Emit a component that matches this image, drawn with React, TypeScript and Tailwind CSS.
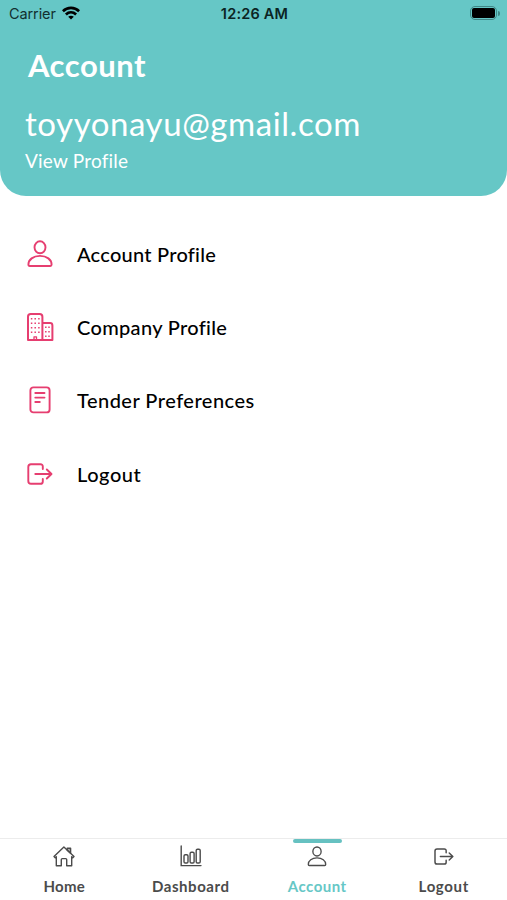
import React from 'react';

type IconProps = { className?: string; strokeWidth?: number };

const UserIcon = ({ className, strokeWidth = 2 }: IconProps) => (
  <svg viewBox="0 0 26 28" className={className} fill="none" stroke="currentColor" strokeWidth={strokeWidth} strokeLinejoin="round">
    <ellipse cx="13" cy="7.3" rx="5.5" ry="6" />
    <path d="M1.4 24.6c0-5 4.8-8.7 11.6-8.7s11.6 3.7 11.6 8.700c0 1-.4 1.400-1.300 1.400H2.700c-.9 0-1.300-.4-1.300-1.400z" />
  </svg>
);

const BuildingIcon = ({ className }: IconProps) => (
  <svg viewBox="0 0 28 30" className={className} fill="none" stroke="currentColor" strokeWidth="2" strokeLinejoin="round" strokeLinecap="round">
    <path d="M2 28V4.700Q2 2 4.700 2h9q2.700 0 2.700 2.700V28M16.400 11h7.600q2.400 0 2.400 2.400V28M2 28h24.400" />
    <path d="M8 28v-3.200h2.500V28" strokeWidth="1.300" />
    <path d="M5.600 6v18M9.200 6v16M12.900 6v18M19.800 14.500v11M23 14.500v11" strokeWidth="1.500" strokeDasharray="1.500 3" strokeLinecap="butt" />
  </svg>
);

const DocumentIcon = ({ className }: IconProps) => (
  <svg viewBox="0 0 22 28" className={className} fill="none" stroke="currentColor" strokeWidth="1.900" strokeLinecap="round">
    <rect x="1.400" y="1.400" width="19.200" height="25" rx="3" />
    <path d="M6.300 7h9.200M6.300 11.600h9.200M6.300 16h4.500" />
  </svg>
);

const LogoutIcon = ({ className, strokeWidth = 2 }: IconProps) => (
  <svg viewBox="0 0 26 22" className={className} fill="none" stroke="currentColor" strokeWidth={strokeWidth} strokeLinecap="round" strokeLinejoin="round">
    <path d="M15.800 6V3.600q0-2.400-2.400-2.400H4Q1.300 1.200 1.300 4v14q0 2.800 2.700 2.800h9.400q2.400 0 2.400-2.400V16M8.300 11h16M19.800 6.500l4.700 4.500-4.700 4.500" />
  </svg>
);

const HomeIcon = ({ className }: IconProps) => (
  <svg viewBox="0 0 22 21" className={className} fill="none" stroke="currentColor" strokeWidth="1.400" strokeLinejoin="round">
    <path d="M1 10.500 10.900 1 21 10.500l-1.200 1.200-1.100-1V19.800h-5v-6.200q0-1-1-1H9.300q-1 0-1 1v6.200h-5v-9.100l-1.100 1z" />
    <path d="M14.200 4.200V2.300h3.400V7.200z" fill="currentColor" fillOpacity=".45" />
  </svg>
);

const ChartIcon = ({ className }: IconProps) => (
  <svg viewBox="0 0 22 22" className={className} fill="none" stroke="currentColor" strokeWidth="1.400" strokeLinecap="round">
    <path d="M1.200 1v19.600h19.800" />
    <rect x="4" y="9.700" width="4" height="8.300" rx="1.300" />
    <rect x="10.100" y="7.300" width="4" height="10.700" rx="1.300" />
    <rect x="16.200" y="4.200" width="4" height="13.800" rx="1.300" />
  </svg>
);

const WifiIcon = () => (
  <svg viewBox="0 0 18 14" className="h-[14px] w-[18px]" fill="none" stroke="currentColor" strokeWidth="2.700">
    <path d="M.9 5.200C5.500.8 12.500.8 17.100 5.200M3.900 8.500c3-2.800 7.200-2.800 10.200 0" />
    <path d="M6.200 10.800c1.600-1.500 4-1.500 5.600 0L9 13.600z" fill="currentColor" stroke="none" />
  </svg>
);

const menu = [
  { label: 'Account Profile', icon: <UserIcon className="h-7 w-[26px]" strokeWidth={1.9} />, text: 'tracking-[0.250px]' },
  { label: 'Company Profile', icon: <BuildingIcon className="h-[30px] w-7" />, text: 'tracking-[0.320px]' },
  { label: 'Tender Preferences', icon: <DocumentIcon className="h-7 w-[22px]" />, text: 'tracking-[0.480px]' },
  { label: 'Logout', icon: <LogoutIcon className="h-[22px] w-[26px]" strokeWidth={1.900} />, text: 'tracking-[0.550px]' },
];

const tabs = [
  { label: 'Home', icon: <HomeIcon className="h-[21px] w-[22px]" />, text: 'tracking-[0.300px]' },
  { label: 'Dashboard', icon: <ChartIcon className="h-[22px] w-[22px]" />, text: 'tracking-[0.560px]' },
  { label: 'Account', icon: <UserIcon className="h-[21px] w-[20px]" strokeWidth={1.8} />, text: 'tracking-[0.500px] text-[#66c7c6]', active: true },
  { label: 'Logout', icon: <LogoutIcon className="h-[17px] w-[20px]" strokeWidth={1.900} />, text: 'tracking-[0.650px]' },
];

export default function App() {
  return (
    <div className="flex h-[900px] w-[507px] flex-col overflow-hidden bg-white font-[Lato,sans-serif] text-black">
      <header className="h-[196px] rounded-b-[26px] bg-[#66c7c6]">
        <div className="grid h-7 grid-cols-3 items-center pl-[9px] pr-[7px] font-[Inter,sans-serif] text-[14.500px]">
          <div className="flex items-center gap-[6px] text-[#12302f]">
            <span className="tracking-[-0.100px]">Carrier</span>
            <span className="-mt-0.5 text-black"><WifiIcon /></span>
          </div>
          <span className="text-center font-semibold tracking-[0.200px] text-[#0b2423]">12:26 AM</span>
          <div className="-mt-0.5 flex items-center justify-end gap-px">
            <div className="h-[14px] w-[27px] rounded-[5px] border-[1.500px] border-[#3f8887] p-px">
              <div className="h-full rounded-[2px] bg-black" />
            </div>
            <div className="h-[5px] w-[2px] rounded-r-full bg-[#3f8887]" />
          </div>
        </div>
        <h1 className="mt-[18px] pl-7 text-[31px] font-bold leading-[38px] tracking-[0.500px] text-white">Account</h1>
        <p className="mt-[19px] pl-[25px] text-[33px] leading-[40px] tracking-[0.570px] text-white">toyyonayu@gmail.com</p>
        <p className="mt-[6px] pl-[25px] text-[19px] leading-6 tracking-[0.200px] text-white">View Profile</p>
      </header>

      <nav className="mt-[21px] flex flex-col">
        {menu.map((m) => (
          <a key={m.label} className="flex h-[73.400px] items-center pl-[25px]">
            <span className="flex w-[30px] justify-center text-[#e63e70]">{m.icon}</span>
            <span className={`ml-[22px] whitespace-nowrap text-[20px] font-medium ${m.text}`}>{m.label}</span>
          </a>
        ))}
      </nav>

      <footer className="mt-auto grid h-[62px] grid-cols-4 border-t border-[#ececec] pl-px text-[#4b4b4b]">
        {tabs.map((t, i) => (
          <div key={i} className="relative flex flex-col items-center">
            {t.active && <span className="absolute top-0 h-1 w-[49px] rounded-full bg-[#66c1c1]" />}
            <span className="mt-[6px] flex h-[22px] items-center">{t.icon}</span>
            <span className={`mt-[9px] text-[15px] font-bold leading-5 ${t.text}`}>{t.label}</span>
          </div>
        ))}
      </footer>
    </div>
  );
}
